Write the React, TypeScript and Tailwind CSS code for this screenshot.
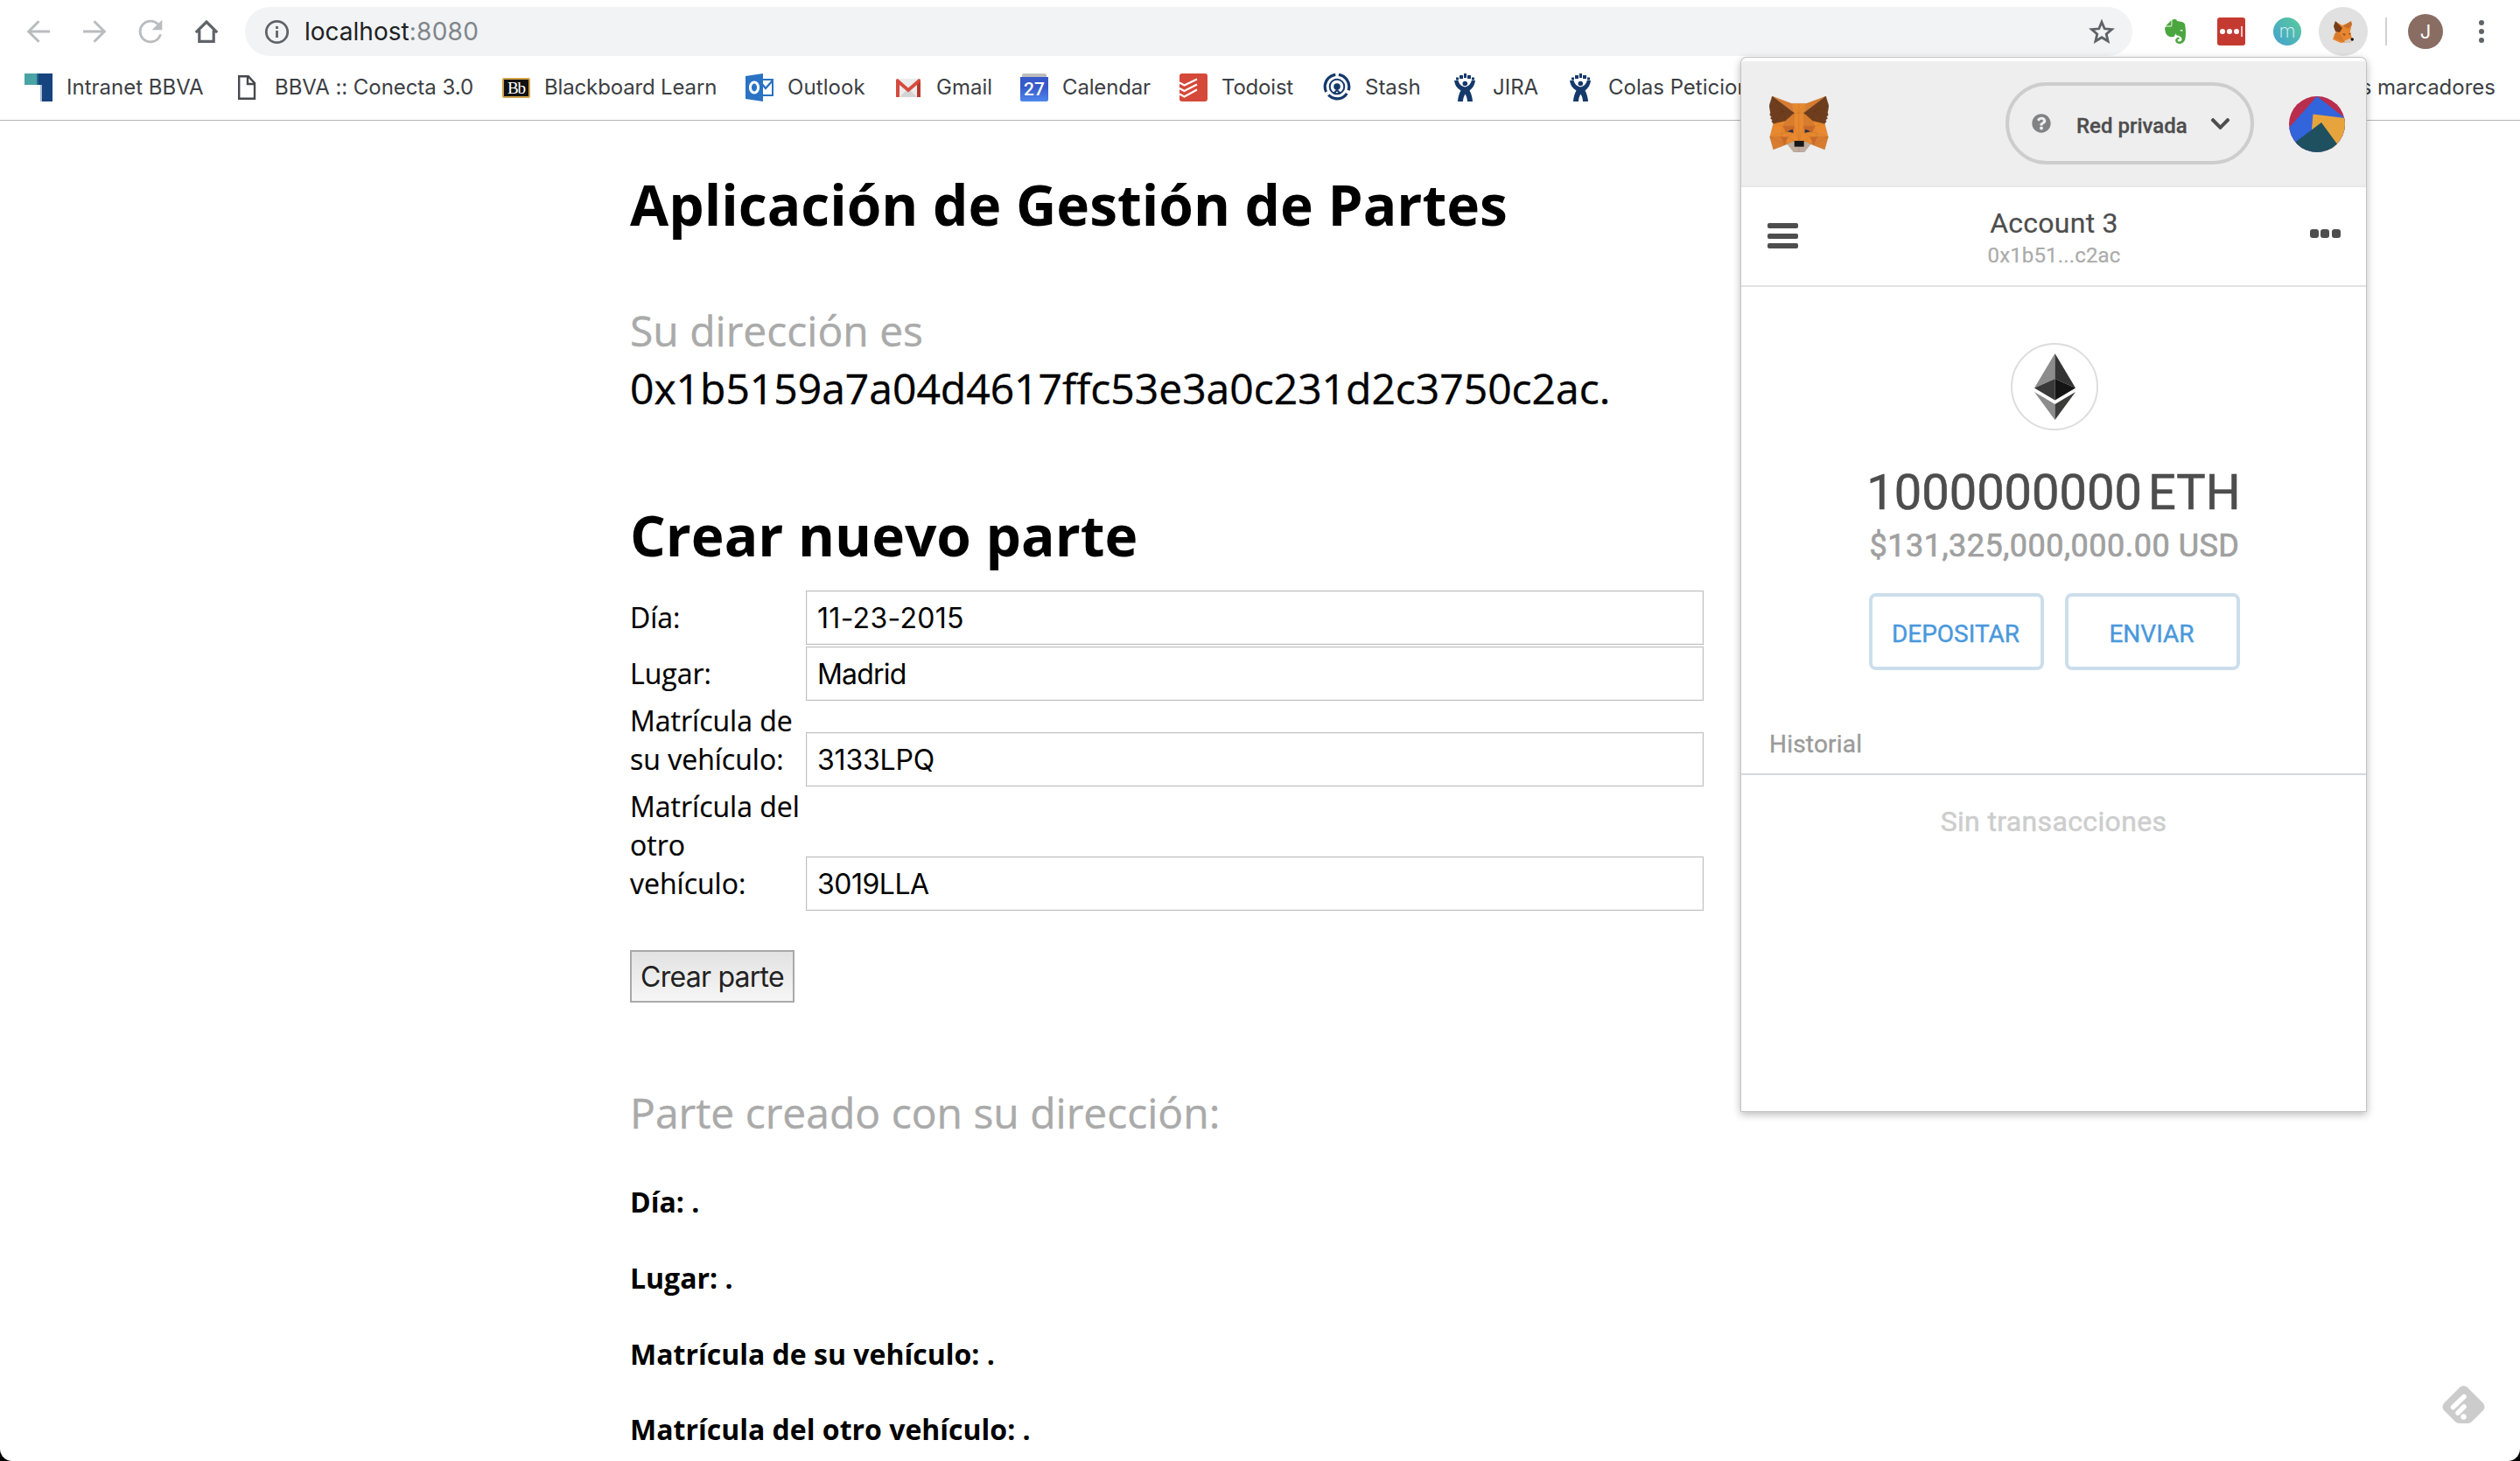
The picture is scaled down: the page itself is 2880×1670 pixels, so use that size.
import type { ReactNode } from "react";
import { FaChevronDown, FaEvernote, FaQuestionCircle } from "react-icons/fa";

/* ---------- toolbar icons ---------- */

const BackIcon = () => (
  <svg viewBox="0 0 32 32" className="size-8" fill="none" stroke="#babcbe" strokeWidth="3">
    <path d="M29 16H5M16.5 4.2 4.7 16l11.8 11.8" />
  </svg>
);

const ForwardIcon = () => (
  <svg viewBox="0 0 32 32" className="size-8" fill="none" stroke="#babcbe" strokeWidth="3">
    <path d="M3 16h24M15.5 4.2 27.3 16 15.5 27.8" />
  </svg>
);

const ReloadIcon = () => (
  <svg viewBox="2.4 2.4 19.2 19.2" className="size-8" fill="#babcbe">
    <path d="M17.65 6.35A7.958 7.958 0 0 0 12 4c-4.42 0-7.99 3.58-7.99 8s3.57 8 7.99 8c3.73 0 6.84-2.55 7.73-6h-1.7A6.4 6.4 0 0 1 12 18.3 6.3 6.3 0 0 1 12 5.7c1.74 0 3.3.7 4.43 1.87L13 11h7V4l-2.35 2.35z" />
  </svg>
);

const HomeIcon = () => (
  <svg viewBox="0 0 32 32" className="size-8" fill="none" stroke="#5f6368" strokeWidth="3.2">
    <path d="M3.8 17.2 16 5l12.2 12.2M7.8 14.5v12.8h16.4V14.5" />
  </svg>
);

const InfoIcon = () => (
  <svg viewBox="0 0 32 32" className="size-8" fill="none" stroke="#5f6368" strokeWidth="2.8">
    <circle cx="16.5" cy="16.5" r="12.2" />
    <path d="M16.5 15v8M16.5 10v3" />
  </svg>
);

const StarIcon = () => (
  <svg viewBox="0 0 32 32" className="size-8" fill="none" stroke="#5f6368" strokeWidth="2.8">
    <path d="M16 5.2l3.2 7.6 8.3.7-6.3 5.4 1.9 8.1L16 22.7 8.9 27l1.9-8.1-6.3-5.4 8.3-.7z" />
  </svg>
);

const SmallFoxIcon = () => (
  <svg viewBox="0 0 24 26" className="h-[26px] w-6">
    <path fill="#e8862f" d="M4 2l7 4 9-4 2 2-2 9 2 8-3 4-10 1-9-4 2-6 3-4z" />
    <path fill="#763d16" d="M3 1l8 8-3 5-5-1-2-6z" />
    <path fill="#c4702c" d="M12 7l9-6 1 4-4 5z" />
    <path fill="#d67a2e" d="M3 14l6 2 4 9-11-4z" />
    <path fill="#d8c6b8" d="M13 24l6-3 4 2-3 3h-5z" />
    <path fill="#8d4a1d" d="M11 15l4 1-2 2zM18 15l3 0-2 2z" />
    <circle cx="22.3" cy="22" r="1.7" fill="#161616" />
  </svg>
);

/* ---------- bookmark icons ---------- */

const BbvaIcon = () => (
  <svg viewBox="0 0 32 32" className="size-8" shapeRendering="crispEdges">
    <path fill="#17437e" d="M14 0h18v32H19V13h-5z" />
    <path fill="#4aa3a5" d="M0 0h14v13H0z" />
    <path fill="#1f6a8c" d="M14 0h2v13h-2z" />
    <path fill="#a9bcd3" d="M18 13h2v19h-2z" />
  </svg>
);

const PageIcon = () => (
  <svg viewBox="0 0 32 32" className="size-8" fill="none" stroke="#46494c" strokeWidth="2.4">
    <path d="M7.2 3.2h10.6L25 11v17.8H7.2zM17 3.5V12h8" />
  </svg>
);

const BlackboardIcon = () => (
  <span className="flex h-[23px] w-8 items-center justify-center rounded-[2px] border-2 border-[#d1a24b] bg-[#111] font-['Liberation_Serif',serif] text-[19px] leading-none tracking-[-1px] text-white">
    Bb
  </span>
);

const OutlookIcon = () => (
  <svg viewBox="0 0 32 32" className="size-8">
    <path fill="#fff" stroke="#2a72c3" strokeWidth="2" d="M18 7h13v18H18z" />
    <path fill="none" stroke="#2a72c3" strokeWidth="2.4" d="M18 11l5 6 8-9" />
    <path fill="#2a72c3" d="M0 3 20 0v32L0 29z" />
    <ellipse cx="10" cy="16" rx="4.6" ry="6" fill="none" stroke="#fff" strokeWidth="3" />
  </svg>
);

const GmailIcon = () => (
  <svg viewBox="0 0 32 32" className="size-8">
    <path fill="#ececec" d="M3 6h26v21H3z" />
    <path fill="#d4d4d4" d="M6 27l10-10 10 10z" />
    <path fill="#d54b3d" d="M2 7.5Q2 6 4 6l12 10.5L28 6q2 0 2 1.5V27h-4V13L16 21.5 6 13v14H2z" />
    <path fill="#b63a2e" d="M26 13l4-4v18h-4z" />
  </svg>
);

const CalendarIcon = () => (
  <span className="flex size-8 flex-col">
    <span className="mx-[2px] h-1 rounded-t-[2px] bg-[#bdbdbd]" />
    <span className="flex h-7 items-center justify-center rounded-b-[2px] bg-linear-to-b from-[#3759c9] from-40% to-[#4f86ee] font-['Roboto',sans-serif] text-[21px] leading-none font-medium text-white">
      27
    </span>
  </span>
);

const TodoistIcon = () => (
  <svg viewBox="0 0 32 32" className="size-8">
    <rect width="32" height="32" rx="3" fill="#d5493a" />
    <path fill="none" stroke="#fff" strokeWidth="2.2" d="M0 10.5l5.5 3L20 6.5M0 17l5.5 3L20 12.5M0 23.5l5.5 3L20 18.5" />
  </svg>
);

const StashIcon = () => (
  <svg viewBox="0 0 32 32" className="size-8" fill="none" stroke="#15396b">
    <circle cx="16" cy="15" r="13.8" strokeWidth="3.2" strokeDasharray="24 4 24 4.5 26 4.2" transform="rotate(-82 16 15)" />
    <circle cx="16" cy="15" r="8.3" strokeWidth="2" />
    <circle cx="16" cy="15" r="3.8" fill="#15396b" stroke="none" />
    <path strokeWidth="2" d="M12 23l4-4 4 4" />
  </svg>
);

const JiraIcon = () => (
  <svg viewBox="0 0 32 32" className="size-8" fill="#15396b">
    <path d="M10 2h4v4h-4zM15 0h3v5h-3zM19 2h4v4h-4zM6 4.5h3v3H6zM24 4.5h3v3h-3z" />
    <circle cx="16.3" cy="11.5" r="2.8" />
    <path d="M4 8h4.5c1 4 3.5 6.5 7.8 7.5 4-1 6.5-3.5 7.5-7.5H28c-.5 5-3 9-6.500 11.500 2 3.500 3.300 8 3.500 12.500h-6c0-3-1-6-2.500-8.500C15 26 14 29 14 32H8c.2-4.500 1.500-9 3.500-12.500C7 17 4.500 13 4 8z" />
  </svg>
);

type Bookmark = { icon: ReactNode; label: string; width: string; tracking?: string };

const bookmarks: Bookmark[] = [
  { icon: <BbvaIcon />, label: "Intranet BBVA", width: "w-[238px]" },
  { icon: <PageIcon />, label: "BBVA :: Conecta 3.0", width: "w-[308px]", tracking: "tracking-[-0.05px]" },
  { icon: <BlackboardIcon />, label: "Blackboard Learn", width: "w-[278px]", tracking: "tracking-[-0.15px]" },
  { icon: <OutlookIcon />, label: "Outlook", width: "w-[170px]", tracking: "tracking-[0.1px]" },
  { icon: <GmailIcon />, label: "Gmail", width: "w-[144px]" },
  { icon: <CalendarIcon />, label: "Calendar", width: "w-[182px]", tracking: "tracking-[-0.15px]" },
  { icon: <TodoistIcon />, label: "Todoist", width: "w-[164px]", tracking: "tracking-[-0.2px]" },
  { icon: <StashIcon />, label: "Stash", width: "w-[146px]" },
  { icon: <JiraIcon />, label: "JIRA", width: "w-[132px]" },
  { icon: <JiraIcon />, label: "Colas Peticiones", width: "w-[300px]" },
];

function BrowserChrome() {
  return (
    <header className="h-[138px] border-b border-[#b3b5b7] bg-white font-['Inter',sans-serif]">
      <div className="flex h-[72px] items-center pl-7">
        <div className="flex gap-8">
          <BackIcon />
          <ForwardIcon />
          <ReloadIcon />
          <HomeIcon />
        </div>
        <div className="ml-7 flex h-14 w-[2157px] items-center rounded-full bg-[#f1f3f4] pr-[19px] pl-5">
          <InfoIcon />
          <span className="ml-4 text-[28px] leading-9 text-[#202124]">
            localhost<span className="tracking-[0.3px] text-[#80868b]">:8080</span>
          </span>
          <span className="ml-auto">
            <StarIcon />
          </span>
        </div>
        <div className="ml-[33px] flex size-8 items-center justify-center">
          <FaEvernote className="h-8 w-[30px] text-[#4ba63f]" />
        </div>
        <div className="ml-8 flex size-8 items-center gap-[2px] rounded-[3px] bg-[#c43a31] pl-[3px]">
          <span className="size-[6px] rounded-full bg-white" />
          <span className="size-[6px] rounded-full bg-white" />
          <span className="size-[6px] rounded-full bg-white" />
          <span className="h-3 w-[2px] bg-[#efc4c1]" />
        </div>
        <div className="ml-8 flex size-8 items-center justify-center rounded-full bg-linear-to-tr from-[#469fd0] to-[#5bcb98] pb-[3px] text-[22px] leading-none font-extralight text-white/80">
          m
        </div>
        <div className="ml-5 flex size-14 items-center justify-center rounded-full bg-[#e1e1e1]">
          <SmallFoxIcon />
        </div>
        <div className="ml-5 h-8 w-[2px] bg-[#cfd1d3]" />
        <div className="ml-6 flex size-10 items-center justify-center rounded-full bg-[#896d63] text-[22px] text-white">J</div>
        <div className="ml-[41px] flex flex-col gap-1">
          <span className="size-[6px] rounded-full bg-[#5f6368]" />
          <span className="size-[6px] rounded-full bg-[#5f6368]" />
          <span className="size-[6px] rounded-full bg-[#5f6368]" />
        </div>
      </div>
      <nav className="flex h-14 items-center pr-7 pl-7 text-[24px] leading-7 text-[#3c4043]">
        {bookmarks.map((b) => (
          <a key={b.label} className={`flex shrink-0 items-center gap-4 ${b.width}`}>
            <span className="flex size-8 shrink-0 items-center">{b.icon}</span>
            <span className={`whitespace-nowrap ${b.tracking ?? ""}`}>{b.label}</span>
          </a>
        ))}
        <a className="ml-auto">Otros marcadores</a>
      </nav>
    </header>
  );
}

/* ---------- page ---------- */

const fields = [
  { label: "Día:", value: "11-23-2015", tracking: "tracking-[0.3px]" },
  { label: "Lugar:", value: "Madrid", tracking: "tracking-[-0.8px]" },
  { label: "Matrícula de su vehículo:", value: "3133LPQ", tracking: "tracking-[-0.2px]" },
  { label: "Matrícula del otro vehículo:", value: "3019LLA", tracking: "tracking-[-0.5px]" },
];

function Page() {
  return (
    <main className="ml-[720px] w-[1227px] pt-[52px] font-['Open_Sans',sans-serif] text-black">
      <h1 className="text-[64px] leading-[88px] font-bold">Aplicación de Gestión de Partes</h1>
      <p className="mt-[67px] text-[48px] leading-[66px] [-webkit-text-stroke:0.4px]">
        <span className="block text-[#aaaaaa]">Su dirección es</span>
        <span className="block">0x1b5159a7a04d4617ffc53e3a0c231d2c3750c2ac.</span>
      </p>
      <h1 className="mt-[91px] text-[64px] leading-[88px] font-bold">Crear nuevo parte</h1>
      <form className="mt-[19px] flex flex-col gap-[1.6px]">
        {fields.map((f) => (
          <div key={f.label} className="flex items-end">
            <label className="mb-[9.4px] w-[201px] shrink-0 text-[32px] leading-[43.6px] [-webkit-text-stroke:0.2px]">{f.label}</label>
            <div
              className={`flex h-[62px] grow items-center border border-[#bfbfbf] bg-white pt-[2px] pl-3 font-['Inter',sans-serif] text-[32px] leading-10 shadow-[inset_0_0_0_1px_#f3f3f3] ${f.tracking}`}
            >
              {f.value}
            </div>
          </div>
        ))}
      </form>
      <button className="mt-[45.4px] flex h-[60px] w-[188px] items-center justify-center border-2 border-[#a9a9a9] bg-linear-to-b from-[#e2e2e2] to-[#f6f6f6] pt-[2px] font-['Inter',sans-serif] text-[32px] leading-10 tracking-[-0.75px] whitespace-nowrap text-[#222]">
        Crear parte
      </button>
      <p className="mt-[93px] text-[48px] leading-[66px] text-[#aaaaaa] [-webkit-text-stroke:0.4px]">
        Parte creado con su dirección:
      </p>
      <div className="mt-[47px] flex flex-col gap-[42.8px] text-[32px] leading-[44px] font-bold">
        <p>Día: .</p>
        <p>Lugar: .</p>
        <p>Matrícula de su vehículo: .</p>
        <p>Matrícula del otro vehículo: .</p>
      </div>
    </main>
  );
}

/* ---------- wallet popup ---------- */

/* One half of the fox; the right half is its mirror image. */
const FoxHalf = () => (
  <g strokeWidth=".8" strokeLinejoin="round">
    <path fill="#e8892f" stroke="#b5692a" d="M76 25H102V155H84L62 164 2 140 14 94 86 58z" />
    <path fill="#d87c30" stroke="#b5692a" d="M10 0 76 25 86 58z" />
    <path fill="#6e3e1e" stroke="#50290f" d="M10 0 86 58 56 84 14 94 8 86 11 82 4 76 8 70 2 65 4 56 0 33z" />
    <path fill="none" stroke="#50290f" strokeOpacity=".5" d="M0 33l48 18M48 51 10 0M48 51 56 84M48 51 4 70M48 51 14 94M48 51l38 7" />
    <path fill="#d87c30" stroke="#b5692a" d="M56 84 86 58 84 102 48 103z" />
    <path fill="#d87c30" stroke="#b5692a" d="M2 140 40 139 62 164 14 183z" />
    <path fill="#c9682b" stroke="#b5692a" d="M48 103 86 103 83 126 56 122z" />
    <path fill="#c9682b" stroke="#b5692a" d="M40 139 64 140 52 166z" />
    <path fill="#243447" d="M62 121 80 113 83 125z" />
    <path fill="none" stroke="#a05a22" strokeOpacity=".7" d="M14 94 48 103 40 139M2 140 56 122 40 139M56 84 14 94M83 126 64 140 86 154M56 122 64 140M2 140 52 166M86 58 102 58M76 25 102 58M86 103l16 50" />
    <path fill="#c0ad9e" stroke="#93857b" d="M62 164 86 155V172H102V192H84z" />
  </g>
);

const FoxLogo = () => (
  <svg viewBox="0 0 204 192" className="mt-10 h-16 w-[68px]">
    <FoxHalf />
    <g transform="translate(204 0) scale(-1 1)">
      <FoxHalf />
    </g>
    <path fill="#161616" d="M86 153h33v20H86z" />
  </svg>
);

const Identicon = () => (
  <svg viewBox="0 0 64 64" className="mt-10 mr-6 ml-10 size-16">
    <clipPath id="avatar">
      <circle cx="32" cy="32" r="32" />
    </clipPath>
    <g clipPath="url(#avatar)">
      <path fill="#b92d4d" d="M0 0h64v64H0z" />
      <path fill="#3264dc" d="M32 0 64 25V64H0V36z" />
      <path fill="#e8a43c" d="M27.5 20.5 64 25v40H40L26 38z" />
      <path fill="#1f505f" d="M37 30 56 56V64H0V58z" />
    </g>
  </svg>
);

const EthDiamond = () => (
  <svg viewBox="0 0 47 76" className="h-[76px] w-[47px]">
    <path fill="#8c8c8c" d="M23.5 0v29L0 39.5z" />
    <path fill="#343434" d="M23.5 0v29L47 39.5z" />
    <path fill="#393939" d="M23.5 29v24.5L0 39.5z" />
    <path fill="#141414" d="M23.5 29v24.5L47 39.5z" />
    <path fill="#8c8c8c" d="M23.5 58v18L0 44z" />
    <path fill="#3c3c3b" d="M23.5 58v18L47 44z" />
  </svg>
);

function WalletButton({ children }: { children: ReactNode }) {
  return (
    <button className="flex h-[88px] w-[200px] items-center justify-center rounded-lg border-4 border-[#ccdeec] pt-[5px] pr-[2px] text-[28px] leading-8 text-[#4a98dc] [-webkit-text-stroke:0.4px]">
      {children}
    </button>
  );
}

function WalletPopup() {
  return (
    <section className="absolute top-[66px] left-[1990px] h-[1204px] w-[714px] rounded-t-[6px] bg-white pt-1 font-['Roboto',sans-serif] shadow-[0_0_0_1px_#c4c4c4,0_3px_10px_1px_rgba(0,0,0,0.28)]">
      <div className="flex h-36 items-start border-b-2 border-[#e8e8e8] bg-[#eeeeee] pl-8">
        <FoxLogo />
        <div className="mt-6 ml-auto flex h-[94px] w-[284px] items-center rounded-full border-4 border-[#cdcdcd] pl-[26px]">
          <FaQuestionCircle className="size-[22px] text-[#808284]" />
          <span className="ml-[29px] pt-[5px] text-[24px] leading-7 font-medium text-[#4d4d4d] [-webkit-text-stroke:0.3px]">
            Red privada
          </span>
          <FaChevronDown className="ml-[25px] size-[25px] text-[#4d4d4d]" />
        </div>
        <Identicon />
      </div>

      <div className="flex h-[114px] items-start justify-between border-b-2 border-[#e0e2e3] pr-[29px] pl-[30px] text-[#4d4d4d]">
        <div className="mt-[41px] flex w-[35px] flex-col gap-[5.5px]">
          <span className="h-[6px] rounded-[2px] bg-[#4d4d4d]" />
          <span className="h-[6px] rounded-[2px] bg-[#4d4d4d]" />
          <span className="h-[6px] rounded-[2px] bg-[#4d4d4d]" />
        </div>
        <div className="pt-[22px] text-center [-webkit-text-stroke:0.2px]">
          <div className="text-[32px] leading-[38px] tracking-[0.25px]">Account 3</div>
          <div className="mt-1 text-[24px] leading-7 tracking-[0.15px] text-[#ababab]">0x1b51...c2ac</div>
        </div>
        <div className="mt-12 flex w-[35px] justify-between">
          <span className="size-[10px] rounded-[3px] bg-[#4d4d4d]" />
          <span className="size-[10px] rounded-[3px] bg-[#4d4d4d]" />
          <span className="size-[10px] rounded-[3px] bg-[#4d4d4d]" />
        </div>
      </div>

      <div className="flex flex-col items-center pt-16 pl-[2px]">
        <div className="flex size-[100px] items-center justify-center rounded-full border-2 border-[#dddddd]">
          <EthDiamond />
        </div>
        <div className="mt-[38px] flex gap-[7px] pr-[2px] text-[56px] leading-[66px] text-[#4d4d4d] [-webkit-text-stroke:0.6px]">
          <span>1000000000</span>
          <span>ETH</span>
        </div>
        <div className="mt-[7px] text-[36px] leading-[42px] tracking-[0.5px] text-[#a0a0a0] [-webkit-text-stroke:0.7px]">
          $131,325,000,000.00 USD
        </div>
        <div className="mt-[33px] flex gap-6">
          <WalletButton>DEPOSITAR</WalletButton>
          <WalletButton>ENVIAR</WalletButton>
        </div>
      </div>

      <div className="mt-[69px] border-b-2 border-[#d4d9dc] pb-[17px] pl-8 text-[28px] leading-8 tracking-[0.2px] text-[#9b9b9b] [-webkit-text-stroke:0.4px]">
        Historial
      </div>
      <div className="mt-[34px] text-center text-[32px] leading-[38px] tracking-[0.35px] text-[#cdcdcd] [-webkit-text-stroke:0.5px]">
        Sin transacciones
      </div>
    </section>
  );
}

const FeedlyBadge = () => (
  <svg viewBox="0 0 49 43" className="absolute right-10 bottom-[43px] h-[43px] w-[49px]">
    <path fill="#cccccc" d="M20.5 1.5Q24.5-1.5 28.5 1.5L47 20Q50 24.5 47 28L34 41Q32 43 29 43H20Q17 43 15 41L2 28Q-1 24.5 2 20z" />
    <path stroke="#fff" strokeWidth="5.5" strokeLinecap="round" d="M12.5 24.5 25 12.5M18 31l7-7" />
    <circle cx="24.5" cy="35.5" r="3.2" fill="#fff" />
  </svg>
);

export default function App() {
  return (
    <div className="h-[1670px] w-[2880px] bg-black">
      <div className="relative h-full overflow-hidden rounded-b-[14px] bg-white">
        <BrowserChrome />
        <Page />
        <WalletPopup />
        <FeedlyBadge />
      </div>
    </div>
  );
}
